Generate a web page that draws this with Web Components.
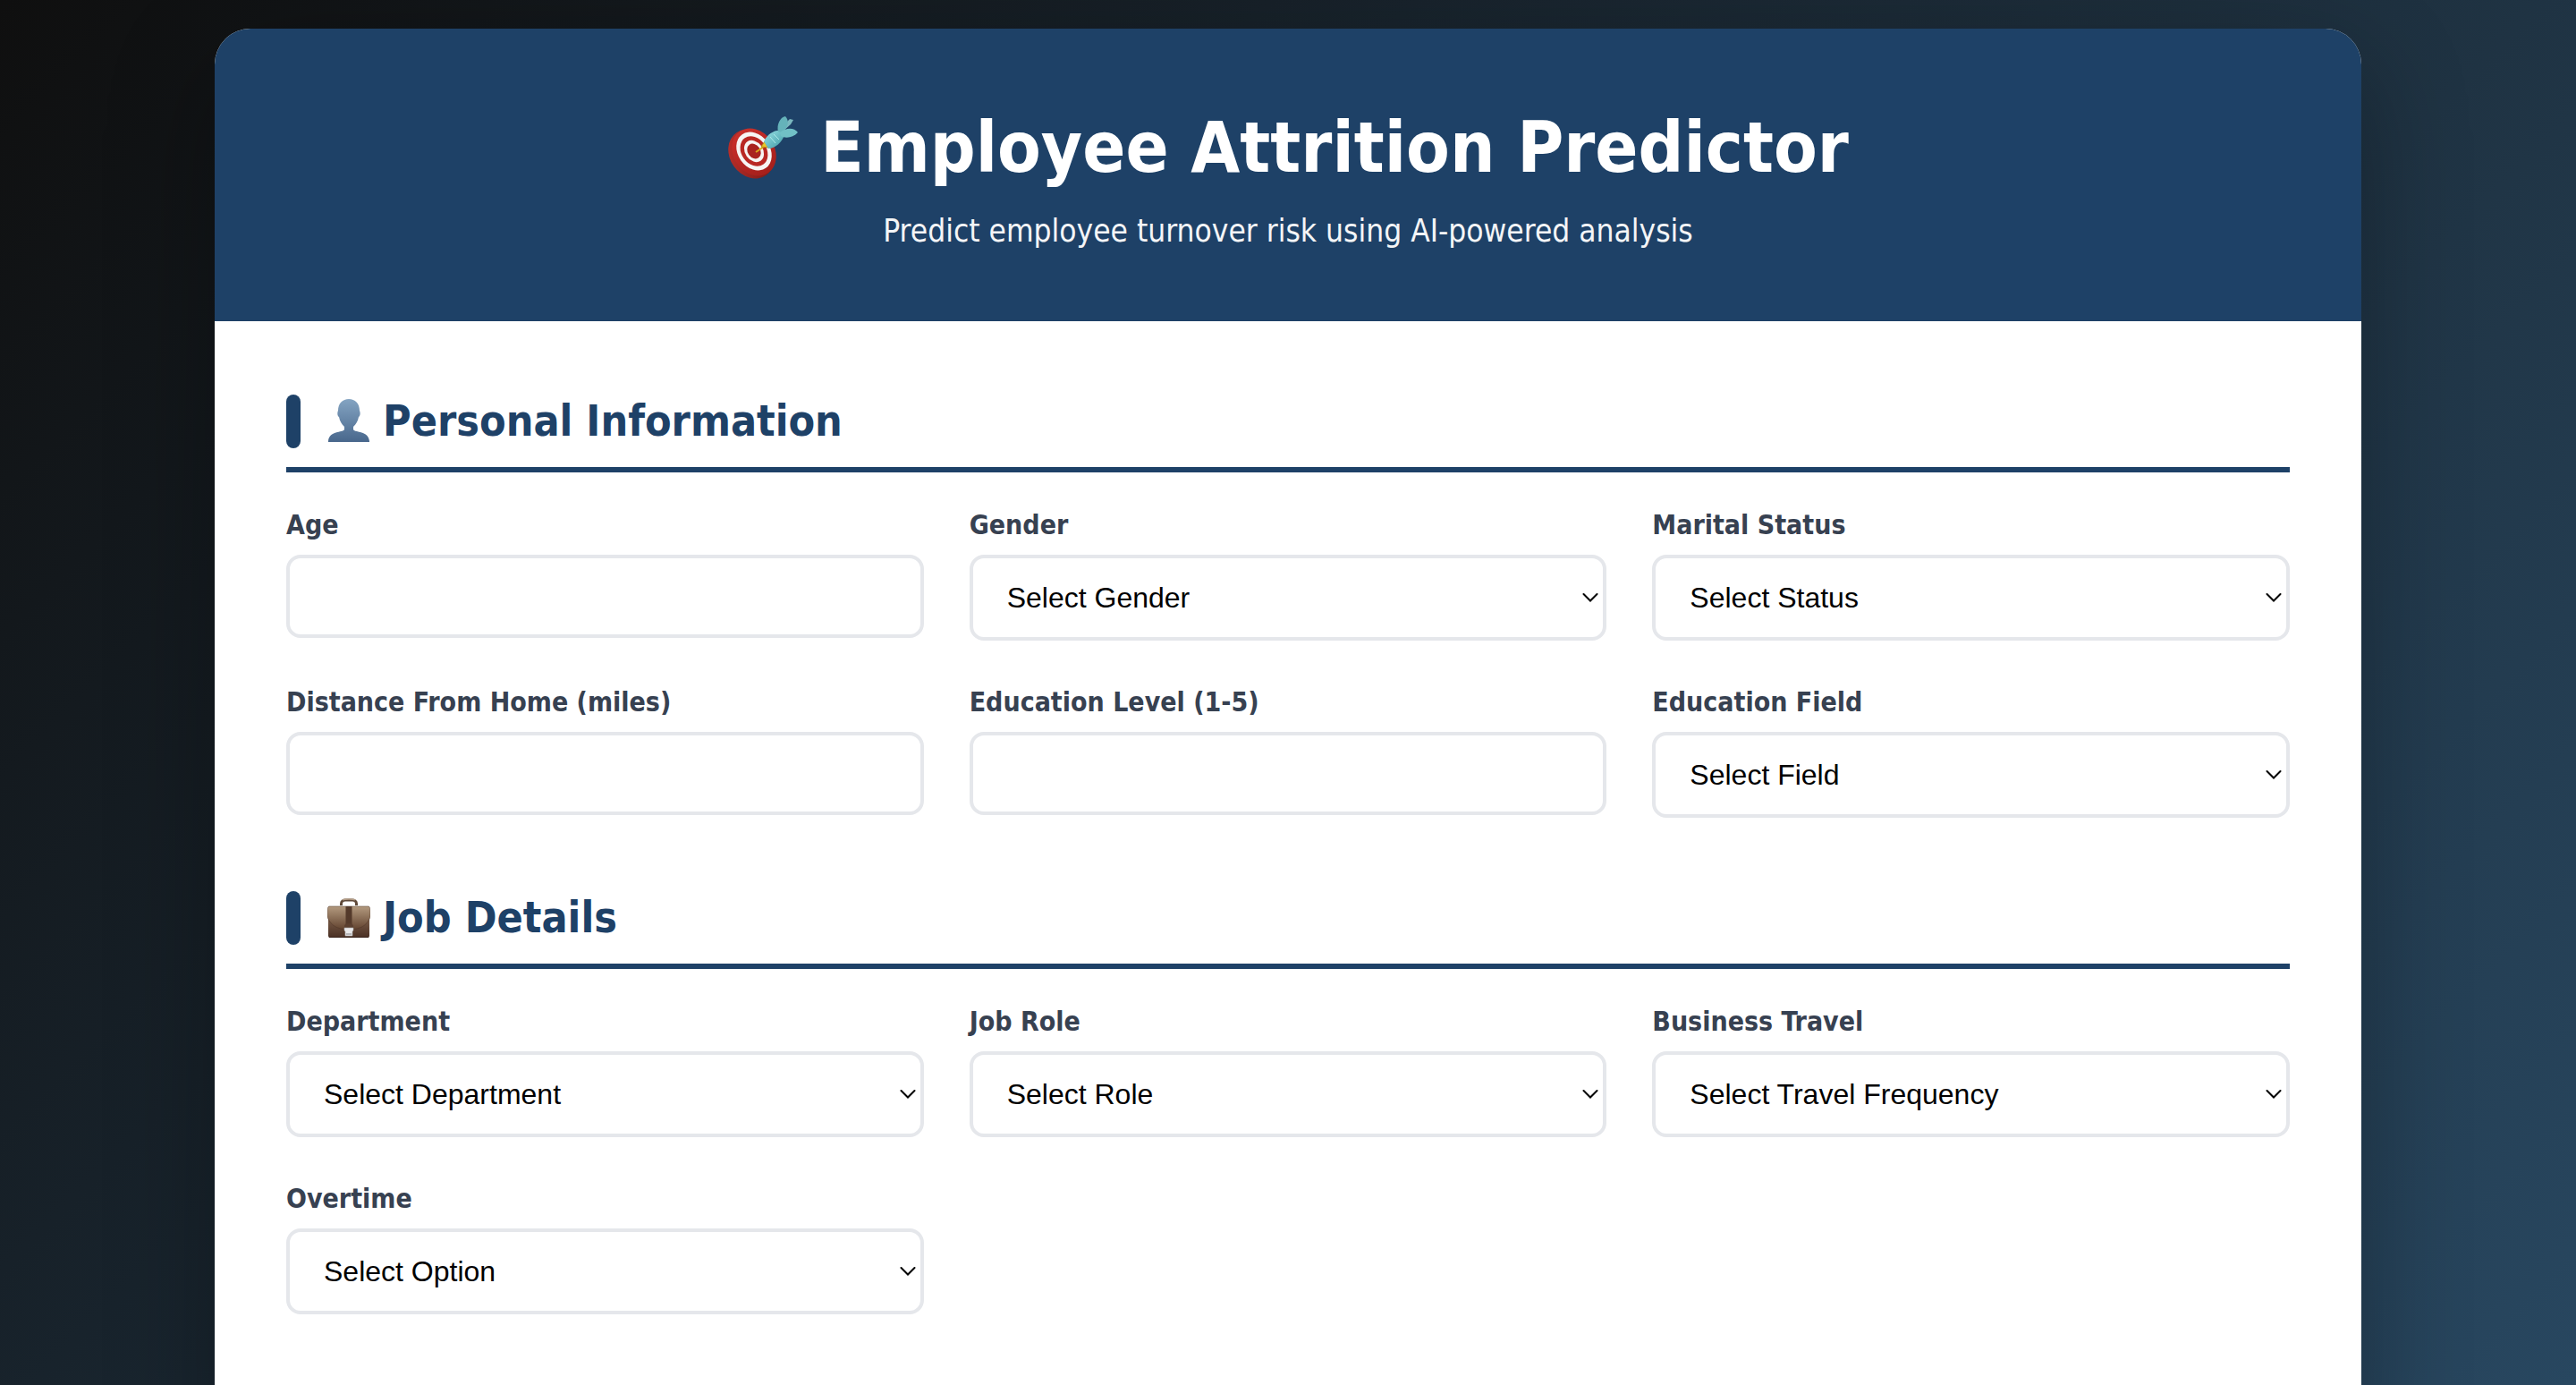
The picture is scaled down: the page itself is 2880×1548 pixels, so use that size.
<!DOCTYPE html>
<html lang="en">
<head>
<meta charset="utf-8">
<title>Employee Attrition Predictor</title>
<style>
html { height: 100%; }
body { margin: 0; height: 100vh; overflow: hidden; box-sizing: border-box; padding: 32px; font-family: "DejaVu Sans Condensed", Tahoma, "DejaVu Sans", sans-serif; background: linear-gradient(135deg, #0f0f0f, #284760); }
</style>
</head>
<body>
<predictor-card>
  <page-banner slot="banner">
    <target-icon slot="icon"></target-icon>
    <span slot="title">Employee Attrition Predictor</span>
    <span slot="subtitle">Predict employee turnover risk using AI-powered analysis</span>
  </page-banner>
  <form-section heading="Personal Information">
    <person-icon slot="icon"></person-icon>
    <text-field label="Age"></text-field>
    <select-field label="Gender" options="Select Gender|Male|Female"></select-field>
    <select-field label="Marital Status" options="Select Status|Single|Married|Divorced"></select-field>
    <text-field label="Distance From Home (miles)"></text-field>
    <text-field label="Education Level (1-5)"></text-field>
    <select-field label="Education Field" options="Select Field|Life Sciences|Medical|Marketing|Other"></select-field>
  </form-section>
  <form-section heading="Job Details">
    <briefcase-icon slot="icon"></briefcase-icon>
    <select-field label="Department" options="Select Department|Sales|Human Resources"></select-field>
    <select-field label="Job Role" options="Select Role|Manager|Sales Executive"></select-field>
    <select-field label="Business Travel" options="Select Travel Frequency|Rarely|Frequently"></select-field>
    <select-field label="Overtime" options="Select Option|Yes|No"></select-field>
  </form-section>
</predictor-card>
<script>
function define(name, html, setup) {
  const template = document.createElement('template');
  template.innerHTML = html;
  customElements.define(name, class extends HTMLElement {
    constructor() {
      super();
      this.attachShadow({ mode: 'open' }).appendChild(template.content.cloneNode(true));
    }
    connectedCallback() { if (setup) setup(this, this.shadowRoot); }
  });
}

define('target-icon', `
<style>:host{display:block;width:80px;height:80px}svg{display:block;width:100%;height:100%}</style>
<svg viewBox="0 0 80 80" aria-hidden="true">
  <defs>
    <linearGradient id="r" x1="0" y1="0" x2="0" y2="1"><stop offset="0" stop-color="#c9302b"/><stop offset="1" stop-color="#a51f1b"/></linearGradient>
    <linearGradient id="e" x1="0" y1="0" x2="1" y2="1"><stop offset="0" stop-color="#c4322d"/><stop offset="1" stop-color="#6e1512"/></linearGradient>
    <linearGradient id="d" x1="0" y1="0" x2="1" y2="1"><stop offset="0" stop-color="#9be3e6"/><stop offset="1" stop-color="#3d98a5"/></linearGradient>
  </defs>
  <ellipse cx="27" cy="42" rx="24" ry="29" transform="rotate(-35 27 42)" fill="url(#e)"/>
  <ellipse cx="30" cy="40" rx="23" ry="28" transform="rotate(-35 30 40)" fill="url(#r)"/>
  <ellipse cx="30" cy="39" rx="18" ry="23" transform="rotate(-35 30 39)" fill="#f7f5f3"/>
  <ellipse cx="30" cy="39" rx="14" ry="18" transform="rotate(-35 30 39)" fill="#b92823"/>
  <ellipse cx="30" cy="39" rx="10" ry="13" transform="rotate(-35 30 39)" fill="#f7f5f3"/>
  <ellipse cx="30" cy="39" rx="7" ry="9" transform="rotate(-35 30 39)" fill="#a9231f"/>
  <path d="M32 40L44 32" stroke="#d8a51d" stroke-width="2"/>
  <path d="M38 34L42 28L45 34L46 35Z" fill="#edc52b" stroke="#b98d14"/>
  <path d="M62 17L71 9L74 4L70 3L62 11Z" fill="#7bb8bf"/>
  <path d="M41 28C45 20 53 15 60 16L64 21C61 29 54 36 46 36Z" fill="url(#d)"/>
  <path d="M57 17C55 10 59 1 65 0C70 5 68 13 61 18Z" fill="#65b3ba"/>
  <path d="M59 18C67 12 75 13 79 18C74 24 65 25 60 22Z" fill="#71c0c6"/>
  <path d="M48 23L54 30M52 20L58 26" stroke="#ace9ea" stroke-width="1"/>
</svg>`);

define('person-icon', `
<style>:host{display:block;width:48px;height:48px}svg{display:block;width:100%;height:100%}</style>
<svg viewBox="0 0 48 48" aria-hidden="true">
  <defs><linearGradient id="p" x1="0" y1="0" x2="0" y2="1"><stop offset="0" stop-color="#84a4c2"/><stop offset="1" stop-color="#48678c"/></linearGradient></defs>
  <path d="M24 0C31 0 36 5 36 13C37 15 37 19 35 20C34 25 32 28 29 31L29 34C31 38 46 35 47 47L47 48H1L1 47C2 35 17 38 19 34L19 31C16 28 14 25 13 20C11 19 11 15 12 13C12 5 17 0 24 0Z" fill="url(#p)"/>
</svg>`);

define('briefcase-icon', `
<style>:host{display:block;width:48px;height:48px}svg{display:block;width:100%;height:100%}</style>
<svg viewBox="0 0 48 48" aria-hidden="true">
  <defs>
    <linearGradient id="b" x1="0" y1="0" x2="0" y2="1"><stop offset="0" stop-color="#a98e74"/><stop offset=".35" stop-color="#7d5f49"/><stop offset="1" stop-color="#4a3024"/></linearGradient>
    <linearGradient id="f" x1="0" y1="0" x2="0" y2="1"><stop offset="0" stop-color="#b39a7f"/><stop offset="1" stop-color="#62432f"/></linearGradient>
  </defs>
  <path d="M15.500 11V9C15.500 6 18 5 20 5H28C30 5 32.500 6 32.500 9V11" fill="none" stroke="#5f4939" stroke-width="3"/>
  <path d="M17 5C19 3.500 29 3.500 31 5" fill="none" stroke="#b49d87" stroke-width="1.500"/>
  <rect x="1" y="12" width="46" height="35" rx="2" fill="url(#b)"/>
  <path d="M2 12H46C47 12 48 14 48 17V24C44 34 36 38 24 38S4 34 0 24V17C0 14 1 12 2 12Z" fill="url(#f)" stroke="#4d3426" stroke-opacity=".5"/>
  <rect x="20.500" y="12" width="7" height="20" fill="#543a2b"/>
  <path d="M19 36V34C19 30 29 30 29 34V36Z" fill="#5b3f2f"/>
  <path d="M19 36H29V39L28 40V45H20V40L19 39Z" fill="#e9e9ea" stroke="#aaa" stroke-width=".6"/>
  <path d="M21 42H27V44H21Z" fill="#b7b7b9"/>
  <path d="M2 46.500H46" stroke="#38231a"/>
</svg>`);

define('predictor-card', `
<style>
:host{display:block;max-width:2400px;margin:0 auto;background:#fff;border-radius:40px;overflow:hidden;box-shadow:0 40px 120px rgba(0,0,0,.3)}
main{display:flex;flex-direction:column;gap:82px;padding:82px 80px 160px}
</style>
<slot name="banner"></slot><main><slot></slot></main>`);

define('page-banner', `
<style>
:host{display:block}
header{display:flex;flex-direction:column;align-items:center;gap:19px;padding:80px;background:#1e4167;color:#fff;text-align:center}
h1{display:flex;align-items:flex-end;gap:24px;margin:0;font-size:79px;line-height:106px;font-weight:700}
::slotted(target-icon){margin-bottom:8px}
p{margin:0;font-size:35px;line-height:42px;color:#f4f5f7}
</style>
<header><h1><slot name="icon"></slot><slot name="title"></slot></h1><p><slot name="subtitle"></slot></p></header>`);

define('form-section', `
<style>
:host{display:block}
h2{display:flex;align-items:flex-start;margin:0 0 41px;padding-bottom:21px;border-bottom:6px solid #1e4167;color:#1e4167;font-size:48px;line-height:58px;font-weight:700}
h2::before{content:"";width:16px;height:60px;border-radius:8px;background:#1e4167;margin-right:30px}
::slotted([slot="icon"]){margin-top:5px}
h2 span{margin-left:14px}
.grid{display:grid;grid-template-columns:repeat(3,minmax(0,1fr));gap:51px}
</style>
<section><h2><slot name="icon"></slot><span></span></h2><div class="grid"><slot></slot></div></section>`,
(host, root) => { root.querySelector('h2 span').textContent = host.getAttribute('heading'); });

const fieldStyle = `
:host{display:block}
label{display:block;margin-bottom:16px;font-size:30px;line-height:35px;font-weight:700;color:#374151}
input,select{display:block;box-sizing:border-box;width:100%;margin:0;border:4px solid #e5e7eb;border-radius:16px;background:#fff;color:#000;font:32px/37px "Liberation Sans",Arial,sans-serif;outline:none}`;

define('text-field', `
<style>${fieldStyle}
input{height:93px;padding:0 38px}
</style>
<label for="control"></label><input id="control" type="text">`,
(host, root) => { root.querySelector('label').textContent = host.getAttribute('label'); });

define('select-field', `
<style>${fieldStyle}
.box{display:grid;align-items:center}
.box>*{grid-area:1/1}
select{height:96px;padding:0 38px;appearance:none}
svg{justify-self:end;width:18px;height:12px;margin-right:9px;pointer-events:none}
</style>
<label for="control"></label>
<div class="box"><select id="control"></select>
<svg viewBox="0 0 18 12" aria-hidden="true"><path d="M1.500 2L9 9.500L16.500 2" fill="none" stroke="#000" stroke-width="2" stroke-linecap="round"/></svg></div>`,
(host, root) => {
  root.querySelector('label').textContent = host.getAttribute('label');
  const select = root.querySelector('select');
  select.replaceChildren(...host.getAttribute('options').split('|').map(text => new Option(text)));
});
</script>
</body>
</html>
